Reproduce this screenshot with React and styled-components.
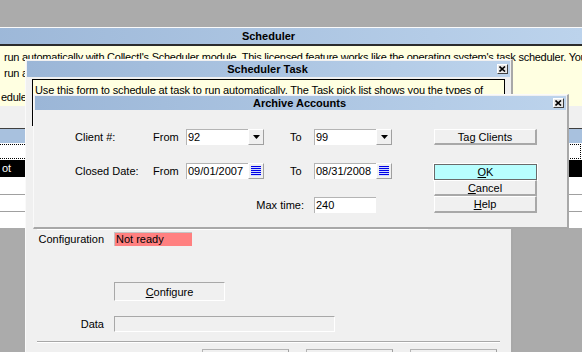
import React from 'react';
import styled, { createGlobalStyle } from 'styled-components';

const GlobalStyle = createGlobalStyle`
  html, body {
    margin: 0;
    padding: 0;
  }
  body {
    font-family: "Liberation Sans", Arial, sans-serif;
    font-size: 11px;
    color: #000;
    background: #ababab;
    overflow: hidden;
  }
  * {
    box-sizing: border-box;
  }
`;

const Desktop = styled.div`
  position: relative;
  width: 582px;
  height: 352px;
  overflow: hidden;
  background: #ababab;
`;

// windows float on the desktop, so these are placed by coordinates
const Window = styled.div`
  position: absolute;
  left: ${p => p.$x}px;
  top: ${p => p.$y}px;
  width: ${p => p.$w}px;
  height: ${p => p.$h}px;
  display: flex;
  flex-direction: column;
  background: #f0f0f0;
  border-top: 1px solid #fafafa;
  border-left: 1px solid #fafafa;
  border-right: ${p => (p.$flat ? 0 : 2)}px solid #a8a8a8;
  border-bottom: ${p => (p.$flat ? 0 : 2)}px solid #a8a8a8;
  padding: ${p => (p.$flat ? 0 : 1)}px;
  overflow: hidden;
`;

const TitleBar = styled.div`
  flex: none;
  height: ${p => p.$h}px;
  display: grid;
  grid-template-columns: 1fr auto 1fr;
  align-items: center;
  background: linear-gradient(to right, #9bb6d7, #bcd3ec);
  font-weight: bold;
  font-size: 11px;
  color: #000;
  padding-right: 2px;
`;

const TitleText = styled.span`
  grid-column: 2;
  white-space: nowrap;
`;

const CloseBox = styled.span`
  grid-column: 3;
  justify-self: end;
  width: 11px;
  height: 10px;
  display: flex;
  align-items: center;
  justify-content: center;
  background: #e8e8e8;
  border-top: 1px solid #fff;
  border-left: 1px solid #fff;
  border-right: 1px solid #404040;
  border-bottom: 1px solid #404040;
`;

const Close = () => (
  <CloseBox>
    <svg width="7" height="6" viewBox="0 0 7 6">
      <path d="M0.5 0.5 L6 5.5 M6 0.5 L0.5 5.5" stroke="#000" strokeWidth="1.6" />
    </svg>
  </CloseBox>
);

/* ---------- Scheduler (back window) ---------- */

const InfoPanel = styled.div`
  flex: none;
  height: 62px;
  border-top: 2px solid #2c2c2c;
  background: #ffffe1;
  padding: 3px 0 0 47px;
  overflow: hidden;
`;

const InfoLine = styled.div`
  height: 16px;
  line-height: 16px;
  white-space: nowrap;
  letter-spacing: -0.25px;
  margin-top: ${p => p.$mt || 0}px;
  margin-left: ${p => p.$ml || 0}px;
`;

const ListGap = styled.div`
  flex: none;
  height: 22px;
`;

const List = styled.div`
  flex: none;
  border-top: 1px solid #404040;
  background: #fff;
`;

const ListHeader = styled.div`
  height: 14px;
  background: #a8c1de;
`;

const ListRow = styled.div`
  height: ${p => p.$h || 17}px;
  line-height: ${p => (p.$h || 17) - 1}px;
  padding-left: 45px;
  white-space: nowrap;
  background: ${p => (p.$selected ? '#000' : '#fff')};
  color: ${p => (p.$selected ? '#fff' : '#000')};
  border-bottom: ${p => (p.$line ? '1px solid #a0a0a0' : 'none')};
  outline: ${p => (p.$focus ? '1px dotted #000' : 'none')};
  outline-offset: -2px;
`;

/* ---------- Scheduler Task ---------- */

const TaskBody = styled.div`
  flex: 1;
  display: flex;
  flex-direction: column;
  padding: 2px 5px 0 5px;
`;

const DescBox = styled.div`
  flex: none;
  height: 47px;
  border: 1px solid #000;
  background: #ffffe1;
  padding: 3px 2px 0;
  line-height: 14px;
  letter-spacing: -0.14px;
  white-space: nowrap;
  overflow: hidden;
`;

const HiddenPanel = styled.div`
  flex: none;
  height: 104px;
  margin: 0 77px 0 5px;
  border-bottom: 1px solid #fff;
`;

const FormRow = styled.div`
  flex: none;
  display: grid;
  grid-template-columns: 72px auto;
  column-gap: 10px;
  align-items: center;
  justify-content: start;
  margin-top: ${p => p.$mt}px;
`;

const FormLabel = styled.span`
  text-align: right;
  white-space: nowrap;
`;

const StatusBox = styled.div`
  width: 78px;
  height: 14px;
  line-height: 13px;
  padding-left: 1px;
  background: #ff8080;
  border-top: 1px solid #c4c4c4;
  border-left: 1px solid #c4c4c4;
`;

const SunkenButton = styled.div`
  width: 111px;
  height: 19px;
  display: flex;
  align-items: center;
  justify-content: center;
  background: #f0f0f0;
  border-top: 1px solid #a8a8a8;
  border-left: 1px solid #a8a8a8;
  border-right: 1px solid #fff;
  border-bottom: 1px solid #fff;
`;

const DataField = styled.div`
  width: 221px;
  height: 16px;
  background: #f0f0f0;
  border-top: 1px solid #a8a8a8;
  border-left: 1px solid #a8a8a8;
  border-right: 1px solid #fff;
  border-bottom: 1px solid #fff;
`;

const Separator = styled.div`
  flex: none;
  margin: 9px 5px 0 5px;
  border-top: 1px solid #a8a8a8;
  border-bottom: 1px solid #fff;
`;

const FooterButtons = styled.div`
  flex: none;
  display: flex;
  justify-content: flex-end;
  gap: 17px;
  padding-right: 8px;
  margin-top: 6px;
`;

const FooterButton = styled.div`
  width: 87px;
  height: 22px;
  display: flex;
  align-items: center;
  justify-content: center;
  background: #f0f0f0;
  border-top: 1px solid #b4b4b4;
  border-left: 1px solid #b4b4b4;
  border-right: 1px solid #a0a0a0;
`;

/* ---------- Archive Accounts ---------- */

const ArchiveBody = styled.div`
  flex: 1;
  display: grid;
  grid-template-columns: 78px 33px 78px 26px 24px 78px 42px 103px;
  grid-template-rows: 16px 16px 16px;
  row-gap: 18px;
  align-items: center;
  padding: 19px 0 0 40px;
`;

const Label = styled.span`
  white-space: nowrap;
  grid-column: ${p => p.$col || 'auto'};
  text-align: ${p => (p.$right ? 'right' : 'left')};
  padding-right: ${p => (p.$right ? 10 : 0)}px;
`;

const Combo = styled.div`
  display: flex;
  height: 16px;
  grid-column: ${p => p.$col || 'auto'};
`;

const Input = styled.div`
  width: 62px;
  height: 16px;
  line-height: 15px;
  padding-left: 1px;
  background: #fff;
  border-top: 1px solid #b4b4b4;
  border-left: 1px solid #b4b4b4;
  white-space: nowrap;
  overflow: hidden;
`;

const PickButton = styled.div`
  width: 16px;
  height: 16px;
  display: flex;
  align-items: center;
  justify-content: center;
  background: #f0f0f0;
  border-top: 1px solid #fff;
  border-left: 1px solid #fff;
  border-right: 1px solid #a0a0a0;
  border-bottom: 1px solid #a0a0a0;
`;

const DropArrow = () => (
  <svg width="7" height="4" viewBox="0 0 7 4">
    <path d="M0 0 H7 L3.5 4 Z" fill="#000" />
  </svg>
);

const CalendarLines = () => (
  <svg width="10" height="10" viewBox="0 0 10 10" shapeRendering="crispEdges">
    {[0, 2, 4, 6, 8].map(y => (
      <rect key={y} x="0" y={y} width="10" height="1" fill="#0000e6" />
    ))}
    {[1, 3, 5, 7, 9].map(y => (
      <rect key={y} x="0" y={y} width="10" height="1" fill="#d0dcff" />
    ))}
  </svg>
);

const RaisedButton = styled.div`
  height: ${p => p.$h || 16}px;
  display: flex;
  align-items: center;
  justify-content: center;
  white-space: nowrap;
  background: ${p => (p.$primary ? '#b8fefe' : '#f0f0f0')};
  border-top: 1px solid ${p => (p.$primary ? '#6a6a6a' : '#fff')};
  border-left: 1px solid ${p => (p.$primary ? '#6a6a6a' : '#fff')};
  border-right: ${p => (p.$primary ? 1 : 2)}px solid ${p => (p.$primary ? '#6a6a6a' : '#a8a8a8')};
  border-bottom: ${p => (p.$primary ? 1 : 2)}px solid ${p => (p.$primary ? '#6a6a6a' : '#a8a8a8')};
  box-shadow: ${p => (p.$primary ? '0 0 0 1px #fff' : 'none')};
`;

const ButtonStack = styled.div`
  grid-column: 8;
  grid-row: 2 / span 2;
  align-self: stretch;
  display: flex;
  flex-direction: column;
  padding: 1px 0 0;
`;

export default function App() {
  return (
    <>
      <GlobalStyle />
      <Desktop>
        <Window $x={-44} $y={27} $w={626} $h={201} $flat>
          <TitleBar $h={16}>
            <TitleText>Scheduler</TitleText>
          </TitleBar>
          <InfoPanel>
            <InfoLine>
              run automatically with CollectI's Scheduler module. This licensed feature works like the operating system's task scheduler. You
            </InfoLine>
            <InfoLine>run a task at a set time, once or on a repeating schedule.</InfoLine>
            <InfoLine $mt={8} $ml={-3}>edule a new task, or pick a task from the list to change it.</InfoLine>
          </InfoPanel>
          <ListGap />
          <List>
            <ListHeader />
            <ListRow $focus />
            <ListRow $selected>ot</ListRow>
            <ListRow $h={18} $line />
            <ListRow $line />
            <ListRow $line />
          </List>
        </Window>

        <Window $x={25} $y={59} $w={488} $h={300}>
          <TitleBar $h={16}>
            <TitleText>Scheduler Task</TitleText>
            <Close />
          </TitleBar>
          <TaskBody>
            <DescBox>
              Use this form to schedule at task to run automatically. The Task pick list shows you the types of
            </DescBox>
            <HiddenPanel />
            <FormRow $mt={2}>
              <FormLabel>Configuration</FormLabel>
              <StatusBox>Not ready</StatusBox>
            </FormRow>
            <FormRow $mt={36}>
              <span />
              <SunkenButton>
                <span><u>C</u>onfigure</span>
              </SunkenButton>
            </FormRow>
            <FormRow $mt={15}>
              <FormLabel>Data</FormLabel>
              <DataField />
            </FormRow>
            <Separator />
            <FooterButtons>
              <FooterButton><u>S</u>ave</FooterButton>
              <FooterButton>Cancel</FooterButton>
              <FooterButton><u>H</u>elp</FooterButton>
            </FooterButtons>
          </TaskBody>
        </Window>

        <Window $x={33} $y={94} $w={536} $h={135}>
          <TitleBar $h={14}>
            <TitleText>Archive Accounts</TitleText>
            <Close />
          </TitleBar>
          <ArchiveBody>
            <Label>Client #:</Label>
            <Label>From</Label>
            <Combo>
              <Input>92</Input>
              <PickButton><DropArrow /></PickButton>
            </Combo>
            <Label $col={5}>To</Label>
            <Combo>
              <Input>99</Input>
              <PickButton><DropArrow /></PickButton>
            </Combo>
            <RaisedButton style={{ gridColumn: 8 }}>Tag Clients</RaisedButton>

            <Label>Closed Date:</Label>
            <Label>From</Label>
            <Combo>
              <Input>09/01/2007</Input>
              <PickButton><CalendarLines /></PickButton>
            </Combo>
            <Label $col={5}>To</Label>
            <Combo>
              <Input>08/31/2008</Input>
              <PickButton><CalendarLines /></PickButton>
            </Combo>
            <ButtonStack>
              <RaisedButton $primary $h={16}><span><u>O</u>K</span></RaisedButton>
              <RaisedButton $h={17}><span><u>C</u>ancel</span></RaisedButton>
              <RaisedButton $h={17}><span><u>H</u>elp</span></RaisedButton>
            </ButtonStack>

            <Label $col="1 / span 5" $right>Max time:</Label>
            <Combo $col={6}>
              <Input>240</Input>
            </Combo>
          </ArchiveBody>
        </Window>
      </Desktop>
    </>
  );
}
